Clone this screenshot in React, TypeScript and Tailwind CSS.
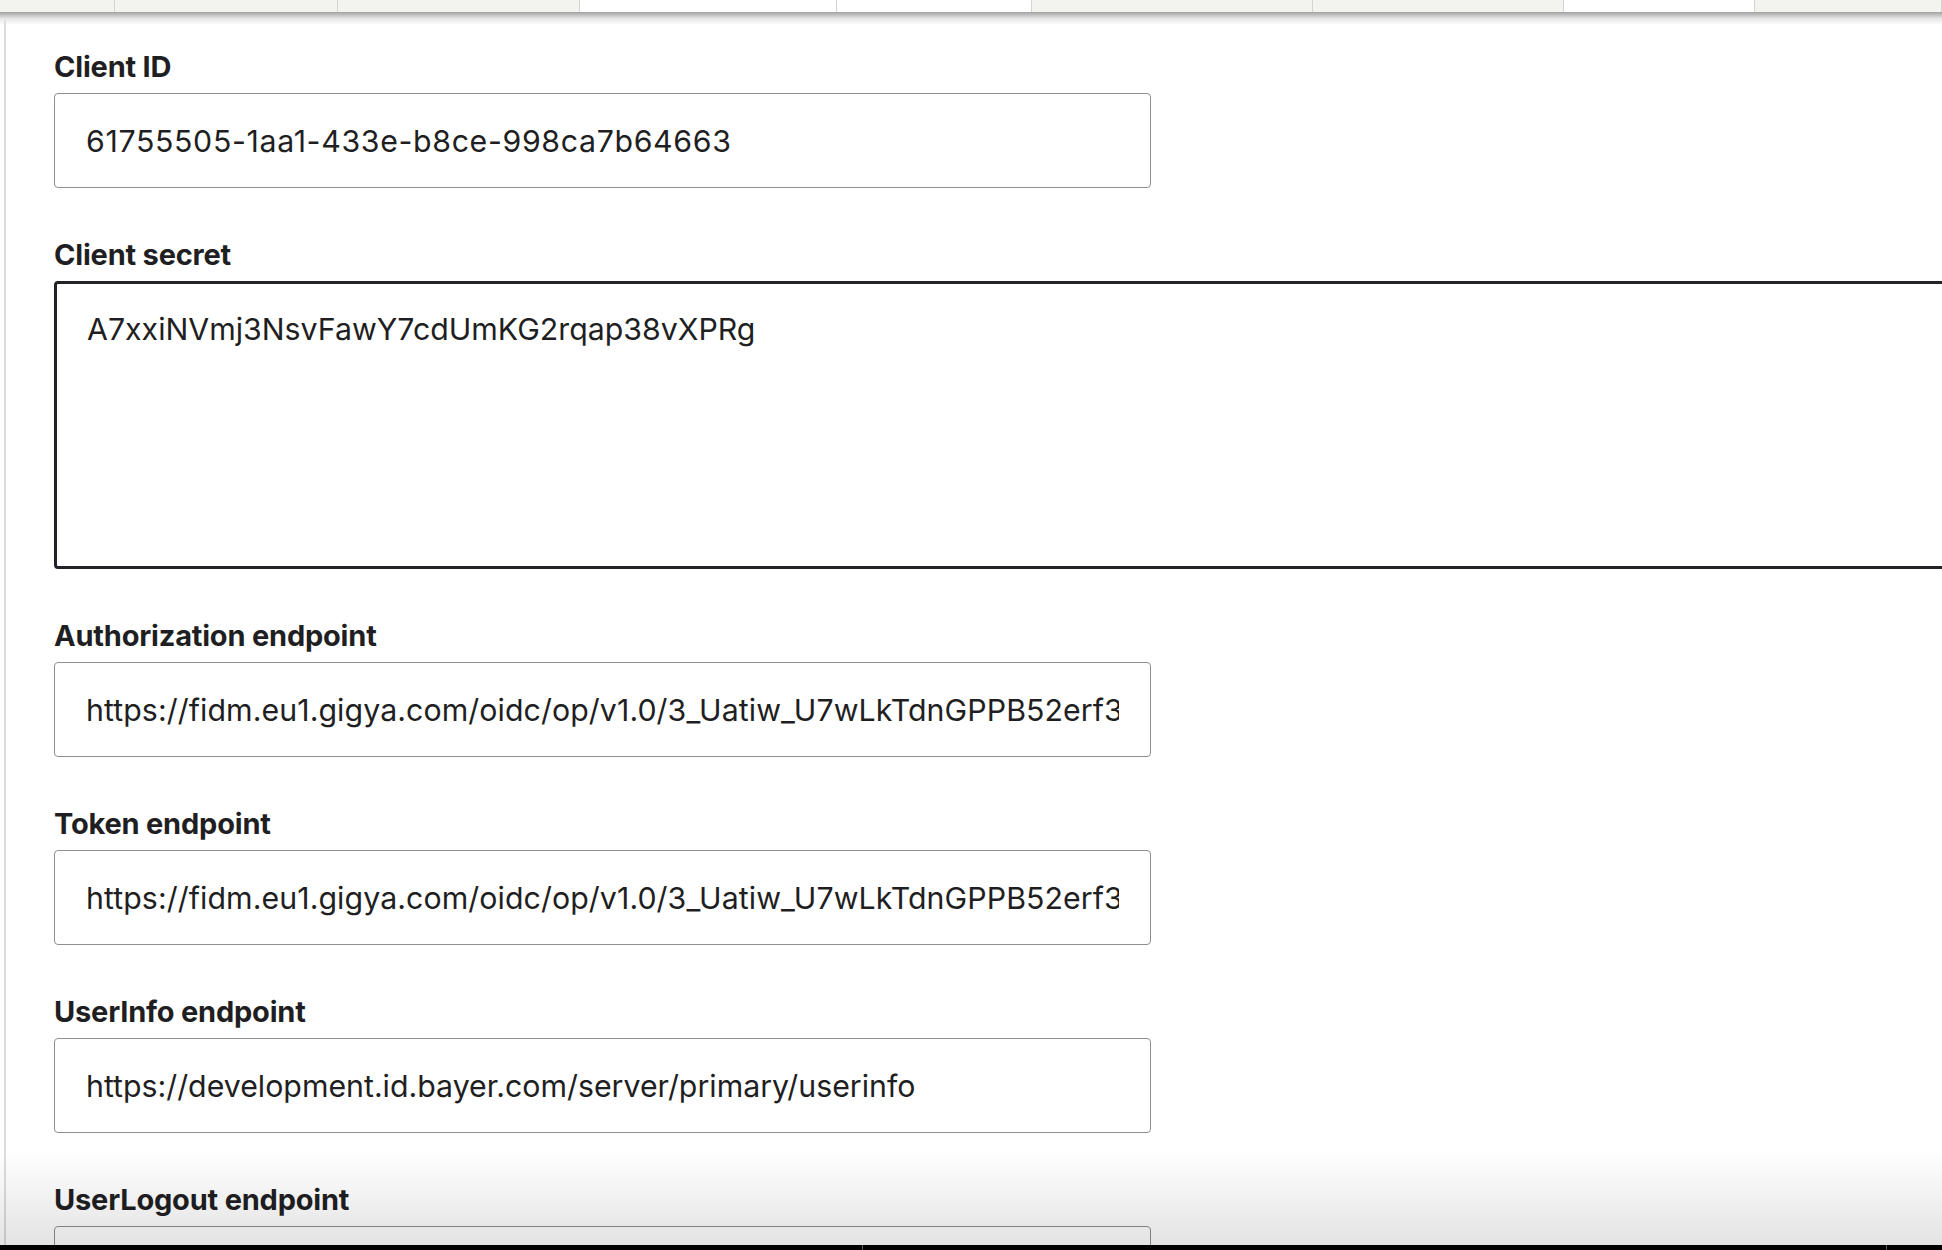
import React from 'react';

// OIDC client settings form, cropped browser view

const tabs = [
  { w: 'w-[115px]', white: false },
  { w: 'w-[223px]', white: false },
  { w: 'w-[242px]', white: false },
  { w: 'w-[257px]', white: true },
  { w: 'w-[195px]', white: true },
  { w: 'w-[281px]', white: false },
  { w: 'w-[251px]', white: false },
  { w: 'w-[191px]', white: true },
  { w: 'flex-1', white: false },
];

const fields = [
  { label: 'Client ID', value: '61755505-1aa1-433e-b8ce-998ca7b64663', track: 'tracking-[0.65px]' },
  { label: 'Client secret', value: 'A7xxiNVmj3NsvFawY7cdUmKG2rqap38vXPRg', area: true },
  {
    label: 'Authorization endpoint',
    value: 'https://fidm.eu1.gigya.com/oidc/op/v1.0/3_Uatiw_U7wLkTdnGPPB52erf3QmXb/authorize',
    track: 'tracking-[0.08px]',
  },
  {
    label: 'Token endpoint',
    value: 'https://fidm.eu1.gigya.com/oidc/op/v1.0/3_Uatiw_U7wLkTdnGPPB52erf3QmXb/token',
    track: 'tracking-[0.08px]',
  },
  { label: 'UserInfo endpoint', value: 'https://development.id.bayer.com/server/primary/userinfo' },
  { label: 'UserLogout endpoint', value: '' },
];

const font = { fontFamily: 'Inter, "Liberation Sans", sans-serif' };

export default function App() {
  return (
    <div className="h-[1250px] w-[1942px] overflow-hidden flex flex-col bg-white" style={font}>
      {/* tab strip */}
      <div className="h-[12px] flex shrink-0">
        {tabs.map((t, i) => (
          <div
            key={i}
            className={`${t.w} h-full border-r border-[#d4d4d0] ${t.white ? 'bg-white' : 'bg-[#f3f4ef]'}`}
          />
        ))}
      </div>

      <div className="relative flex-1 overflow-hidden">
        <div className="absolute top-0 left-0 right-0 h-[13px] bg-gradient-to-b from-[#a2a2a2] via-[#e6e6e6] to-white/0 z-10" />

        <div className="h-full pl-[4px]">
          <div className="h-full border-l-2 border-[#dcdcdc] pl-[48px] pt-[37px]">
            {fields.map((f) => (
              <div key={f.label} className="mb-[49px]">
                <div className="h-[36px] leading-[36px] text-[29px] font-bold text-[#1f1f23] tracking-[-0.2px] mb-[8px]">
                  {f.label}
                </div>
                {f.area ? (
                  <textarea
                    readOnly
                    value={f.value}
                    className="block w-[2000px] h-[288px] border-[3px] border-[#222327] rounded-[4px] pl-[30px] pt-[27px] text-[30.3px] leading-[37px] text-[#1f1f23] resize-none outline-none"
                    style={font}
                  />
                ) : (
                  <input
                    readOnly
                    value={f.value}
                    className={`block w-[1097px] h-[95px] border border-[#8e8e93] rounded-[4px] px-[31px] text-[30.3px] text-[#1f1f23] outline-none ${f.track ?? ''}`}
                    style={font}
                  />
                )}
              </div>
            ))}
          </div>
        </div>

        <div className="pointer-events-none absolute left-0 right-0 bottom-0 h-[95px] bg-gradient-to-b from-black/0 to-black/[0.11] z-10" />
      </div>

      <div className="h-[5px] bg-black shrink-0 flex">
        <div className="w-[862px]" />
        <div className="w-[1px] bg-[#555]" />
        <div className="w-[1023px]" />
        <div className="w-[1px] bg-[#555]" />
      </div>
    </div>
  );
}
